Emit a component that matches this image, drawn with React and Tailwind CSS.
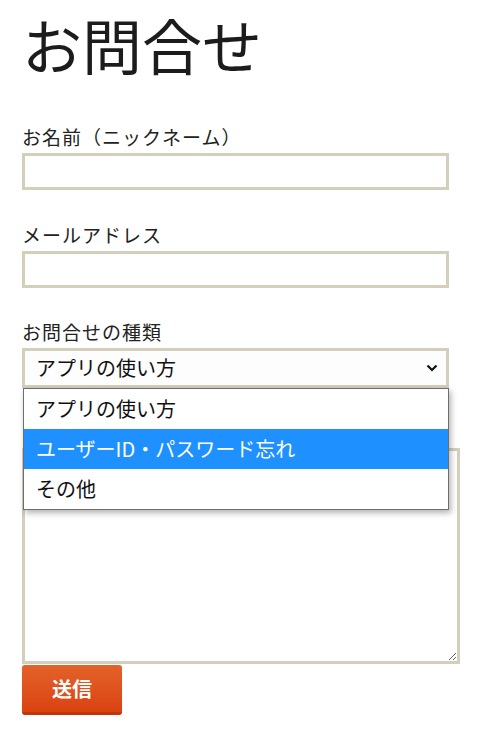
export default function App() {
  const labelCls = 'block pb-[5px] text-[19px] tracking-[1px] leading-[22px] text-[#222]';
  const inputCls = 'block w-[427px] h-[37px] border-[3px] border-[#d3cfbb] bg-white outline-none';

  return (
    <div className="min-h-screen bg-white px-[22px] font-['Noto_Sans_CJK_JP',sans-serif] text-[#1c1c1c]">
      <h1 className="text-[60px] leading-[88px] font-normal">お問合せ</h1>

      <form className="mt-[38px]">
        <div>
          <label className={labelCls}>お名前（ニックネーム）</label>
          <input type="text" className={inputCls} />
        </div>

        <div className="mt-[34px]">
          <label className={labelCls}>メールアドレス</label>
          <input type="email" className={inputCls} />
        </div>

        <div className="mt-[33px]">
          <label className={labelCls}>お問合せの種類</label>
          <div className="relative w-[427px]">
            <div className="flex h-[40px] items-center justify-between border-[3px] border-[#d3cfbb] bg-[#fdfdfd] pl-[11px] pr-[6px] text-[20px] text-[#111]">
              <span>アプリの使い方</span>
              <svg width="12" height="8" viewBox="0 0 12 8" className="mr-[2px]">
                <polyline points="1.5,1.5 6,6 10.5,1.5" fill="none" stroke="#111" strokeWidth="2.2" />
              </svg>
            </div>

            {/* open select popup */}
            <div className="absolute left-[1px] top-[40px] z-10 w-[426px] border border-[#6e6e6e] bg-white text-[20px] text-[#111] shadow-[2px_3px_6px_rgba(0,0,0,0.3)]">
              <div className="flex h-[40px] items-center pl-[12px]">アプリの使い方</div>
              <div className="flex h-[40px] items-center bg-[#1e90ff] pl-[12px] text-white">ユーザーID・パスワード忘れ</div>
              <div className="flex h-[40px] items-center pl-[12px]">その他</div>
            </div>
          </div>
        </div>

        <div className="mt-[33px]">
          <label className={labelCls}>お問合せ内容</label>
          <textarea className="block h-[216px] w-[438px] border-[3px] border-[#d3cfbb] bg-white outline-none" />
        </div>

        <button
          type="button"
          className="mt-[1px] flex h-[50px] w-[100px] items-center justify-center rounded-[3px] border-b-[3px] border-[#c2360a] bg-linear-to-b from-[#e4622a] to-[#d9420f] text-[20px] font-bold text-white"
        >
          送信
        </button>
      </form>
    </div>
  );
}
